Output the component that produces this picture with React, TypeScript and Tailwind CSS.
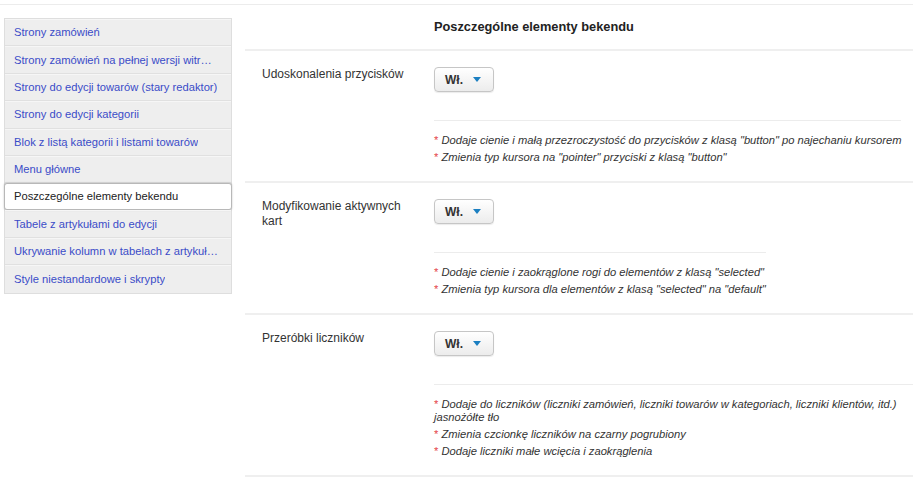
import React from "react";

const menu = [
  "Strony zamówień",
  "Strony zamówień na pełnej wersji witryny",
  "Strony do edycji towarów (stary redaktor)",
  "Strony do edycji kategorii",
  "Blok z listą kategorii i listami towarów",
  "Menu główne",
  "Poszczególne elementy bekendu",
  "Tabele z artykułami do edycji",
  "Ukrywanie kolumn w tabelach z artykułami",
  "Style niestandardowe i skrypty",
];

const rows: { label: string; notes: string[] }[] = [
  {
    label: "Udoskonalenia przycisków",
    notes: [
      'Dodaje cienie i małą przezroczystość do przycisków z klasą "button" po najechaniu kursorem',
      'Zmienia typ kursora na "pointer" przyciski z klasą "button"',
    ],
  },
  {
    label: "Modyfikowanie aktywnych kart",
    notes: [
      'Dodaje cienie i zaokrąglone rogi do elementów z klasą "selected"',
      'Zmienia typ kursora dla elementów z klasą "selected" na "default"',
    ],
  },
  {
    label: "Przeróbki liczników",
    notes: [
      "Dodaje do liczników (liczniki zamówień, liczniki towarów w kategoriach, liczniki klientów, itd.) jasnożółte tło",
      "Zmienia czcionkę liczników na czarny pogrubiony",
      "Dodaje liczniki małe wcięcia i zaokrąglenia",
    ],
  },
];

function Toggle() {
  return (
    <div className="flex h-[25px] w-[60px] items-center justify-between rounded-[4px] border border-[#c6c6c6] bg-gradient-to-b from-white to-[#ececec] pl-[10px] pr-[12px] shadow-[0_1px_1px_rgba(0,0,0,0.08)]">
      <span className="text-[12px] font-bold text-[#333]">Wł.</span>
      <svg width="8" height="5" viewBox="0 0 8 5">
        <path d="M0 0 L8 0 L4 5 Z" fill="#1b7fc1" />
      </svg>
    </div>
  );
}

export default function App() {
  return (
    <div
      className="min-h-[483px] w-[920px] bg-white text-[12px] text-[#333]"
      style={{ fontFamily: '"Liberation Sans", Arial, sans-serif' }}
    >
      <div className="pt-[4px]">
        <div className="flex w-[913px] border-t-[1.5px] border-[#ececec]">
          <div className="ml-[4px] mt-[13px] w-[228px] self-start border border-[#dedede] bg-[#eeeeee] text-[11.2px]">
            {menu.map((m, i) => {
              const active = i === 6;
              const last = i === menu.length - 1;
              return active ? (
                <div
                  key={m}
                  className="-mx-px flex h-[27px] items-center rounded-[3px] border border-[#b8b8b8] bg-white px-[9px] text-[#222] shadow-[0_0_2px_rgba(0,0,0,0.25)]"
                >
                  <span className="truncate">{m}</span>
                </div>
              ) : (
                <div
                  key={m}
                  className={
                    "flex h-[27.4px] items-center border-t border-t-[#f6f6f6] pl-[9px] pr-[13px] text-[#3a4cc8] " +
                    (last ? "" : "border-b border-b-[#e0e0e0]")
                  }
                >
                  <span className={i === 1 ? "max-w-[202px] truncate" : "truncate"}>{m}</span>
                </div>
              );
            })}
          </div>

          <div className="ml-[13px] w-[668px]">
            <div className="flex h-[46px] items-center border-b-2 border-[#efefef] pl-[189px]">
              <span className="text-[12.8px] font-bold text-[#222]">Poszczególne elementy bekendu</span>
            </div>
            {rows.map((r) => (
              <div key={r.label} className="flex border-b-2 border-[#efefef] pb-[17px]">
                <div className="w-[189px] shrink-0 pl-[17px] pr-[14px] pt-[16px] leading-[15px] text-[#333]">
                  {r.label}
                </div>
                <div className="min-w-0 flex-1 pt-[16px]">
                  <Toggle />
                  <div className="mt-[28px] w-fit max-w-full border-t-[1.5px] border-[#ececec] pt-[13px]">
                    <ul className="flex flex-col gap-[4px] text-[11.2px] italic leading-[13px] text-[#333]">
                      {r.notes.map((n) => (
                        <li key={n}>
                          <span className="not-italic text-[#e5474b]">*</span> {n}
                        </li>
                      ))}
                    </ul>
                  </div>
                </div>
              </div>
            ))}
          </div>
        </div>
      </div>
    </div>
  );
}
